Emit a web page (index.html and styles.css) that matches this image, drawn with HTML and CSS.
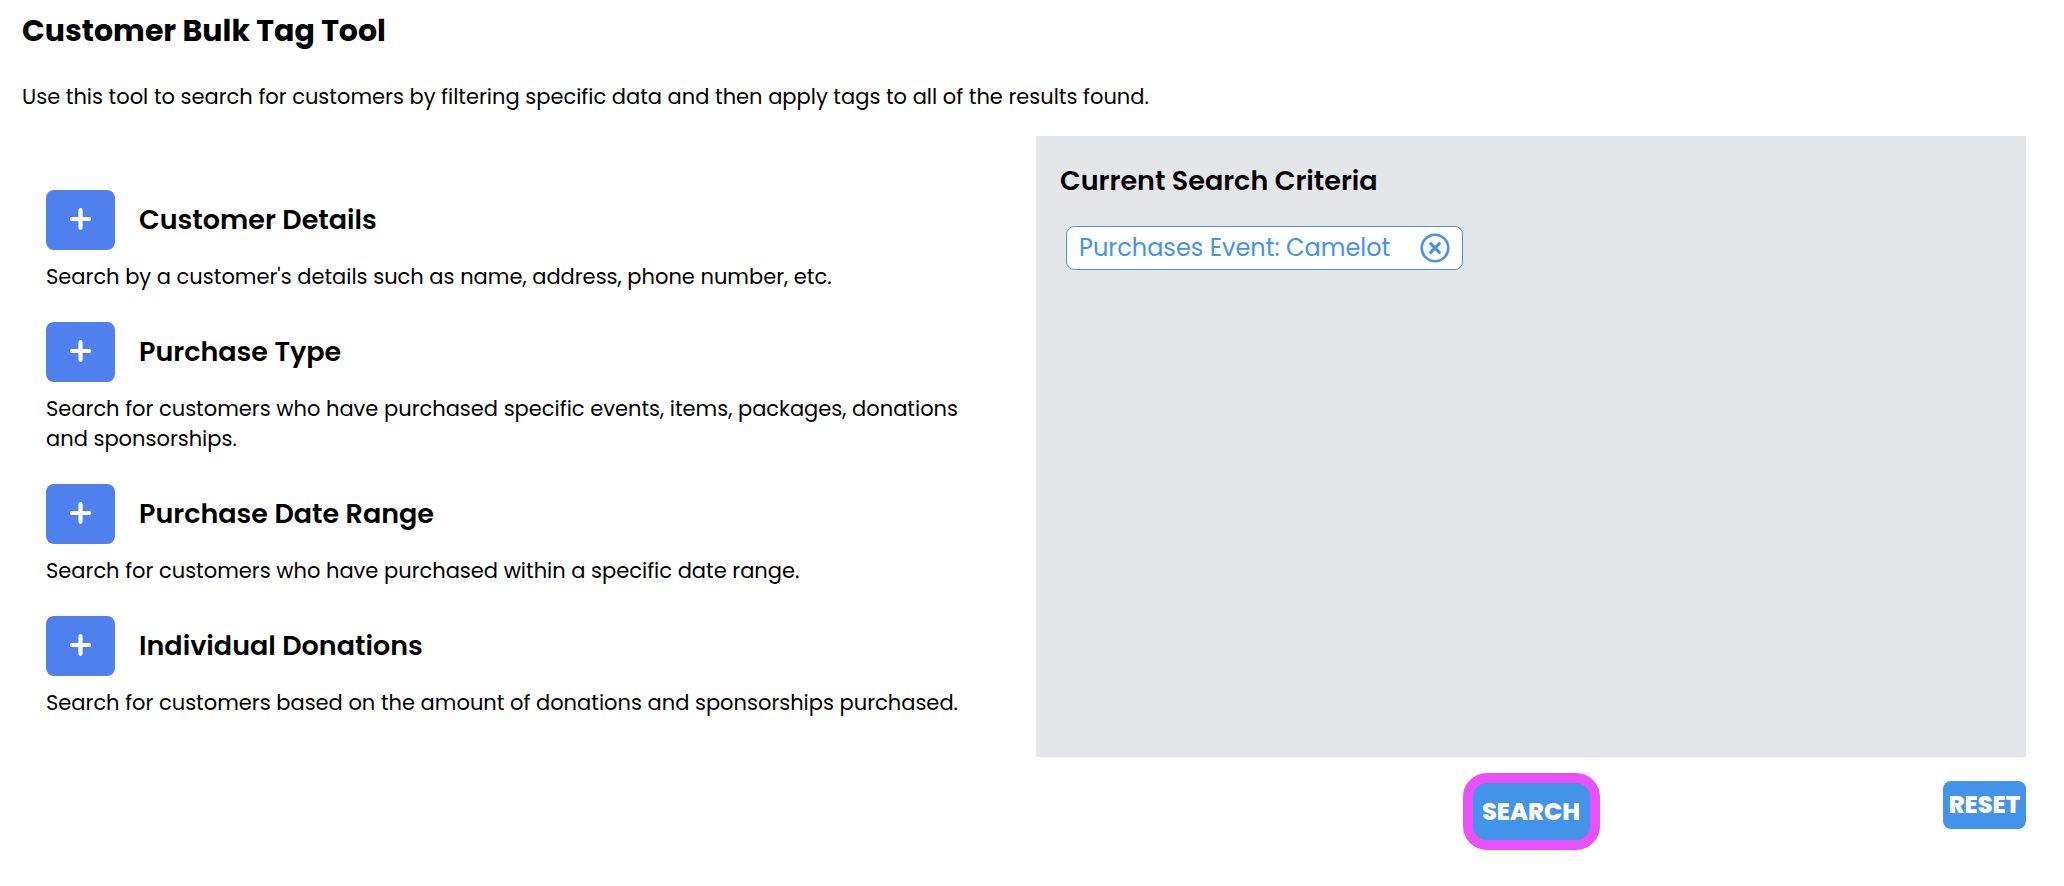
FILE: index.html
```html
<!DOCTYPE html>
<html lang="en">
<head>
<meta charset="utf-8">
<meta name="viewport" content="width=device-width, initial-scale=1">
<title>Customer Bulk Tag Tool</title>
<link rel="stylesheet" href="styles.css">
</head>
<body>
<main class="page">
  <h1 class="title">Customer Bulk Tag Tool</h1>
  <p class="intro">Use this tool to search for customers by filtering specific data and then apply tags to all of the results found.</p>
  <div class="columns">
    <div class="filters">
      <section class="filter">
        <div class="filter-head">
          <button class="add" type="button" aria-label="Add customer details"><svg class="plus" viewBox="0 0 21 22"><path d="M10.5 2.2v17.6M2 11h17"/></svg></button>
          <h2 class="heading">Customer Details</h2>
        </div>
        <p class="text">Search by a customer's details such as name, address, phone number, etc.</p>
      </section>
      <section class="filter">
        <div class="filter-head">
          <button class="add" type="button" aria-label="Add purchase type"><svg class="plus" viewBox="0 0 21 22"><path d="M10.5 2.2v17.6M2 11h17"/></svg></button>
          <h2 class="heading">Purchase Type</h2>
        </div>
        <p class="text">Search for customers who have purchased specific events, items, packages, donations and sponsorships.</p>
      </section>
      <section class="filter">
        <div class="filter-head">
          <button class="add" type="button" aria-label="Add purchase date range"><svg class="plus" viewBox="0 0 21 22"><path d="M10.5 2.2v17.6M2 11h17"/></svg></button>
          <h2 class="heading">Purchase Date Range</h2>
        </div>
        <p class="text">Search for customers who have purchased within a specific date range.</p>
      </section>
      <section class="filter">
        <div class="filter-head">
          <button class="add" type="button" aria-label="Add individual donations"><svg class="plus" viewBox="0 0 21 22"><path d="M10.5 2.2v17.6M2 11h17"/></svg></button>
          <h2 class="heading">Individual Donations</h2>
        </div>
        <p class="text">Search for customers based on the amount of donations and sponsorships purchased.</p>
      </section>
    </div>
    <section class="criteria">
      <h2 class="heading">Current Search Criteria</h2>
      <div class="chip">
        <span>Purchases Event: Camelot</span>
        <button class="remove" type="button" aria-label="Remove criterion"><svg class="remove-icon" viewBox="0 0 30 30"><circle cx="15" cy="15" r="13.3"/><path class="cross" d="M10.7 10.7l8.6 8.6M19.3 10.7l-8.6 8.6"/></svg></button>
      </div>
    </section>
    <div class="actions">
      <button class="action search" type="submit">SEARCH</button>
      <button class="action reset" type="reset">RESET</button>
    </div>
  </div>
</main>
</body>
</html>
```
FILE: styles.css
```css
* {
  box-sizing: border-box;
}

body {
  margin: 0;
  background: #fff;
  color: #000;
  font-family: Poppins, Inter, sans-serif;
  font-size: 21px;
  line-height: 30px;
}

h1, h2, p {
  margin: 0;
}

button {
  padding: 0;
  border: 0;
  font: inherit;
  cursor: pointer;
}

.page {
  padding: 13px 38px 36px 22px;
}

.title {
  font-size: 30px;
  font-weight: 700;
  line-height: 36px;
}

.intro {
  padding: 33px 0 24px;
}

.columns {
  display: grid;
  grid-template-columns: 1fr 1fr;
  column-gap: 24px;
}

.filters {
  display: flex;
  flex-direction: column;
  gap: 30px;
  padding: 54px 24px 39px;
}

.filter {
  display: flex;
  flex-direction: column;
  gap: 12px;
}

.filter-head {
  display: flex;
  align-items: center;
  gap: 24px;
}

.add {
  display: flex;
  align-items: center;
  justify-content: center;
  width: 69px;
  height: 60px;
  padding-bottom: 2px;
  border-radius: 8px;
  background: #4f80ee;
}

.plus {
  width: 21px;
  height: 22px;
  fill: none;
  stroke: #fff;
  stroke-width: 4.2;
  stroke-linecap: round;
}

.heading {
  font-size: 27px;
  font-weight: 600;
  line-height: 36px;
}

.criteria {
  padding: 27px 24px;
  background: #e5e6ea;
}

.chip {
  display: inline-flex;
  align-items: center;
  gap: 30px;
  height: 44px;
  margin: 27px 6px;
  padding: 0 12px;
  border: 1px solid #4493ea;
  border-radius: 8px;
  background: #fff;
  color: #4493ea;
  font-size: 24px;
}

.remove {
  display: flex;
  background: none;
  color: inherit;
}

.remove-icon {
  width: 30px;
  height: 30px;
  fill: none;
  stroke: currentColor;
  stroke-width: 2.6;
}

.cross {
  stroke-width: 3.1;
  stroke-linecap: round;
}

.actions {
  display: grid;
  grid-column: 2;
  grid-template-columns: 1fr auto 1fr;
  align-items: start;
  padding-top: 16px;
}

.action {
  background: #4493ea;
  color: #fff;
  font-size: 24px;
  font-weight: 800;
}

.search {
  grid-column: 2;
  width: 137px;
  height: 77px;
  border: 10px solid #ea50f7;
  border-radius: 24px;
}

.reset {
  justify-self: end;
  width: 83px;
  height: 48px;
  margin-top: 8px;
  border-radius: 8px;
}
```
